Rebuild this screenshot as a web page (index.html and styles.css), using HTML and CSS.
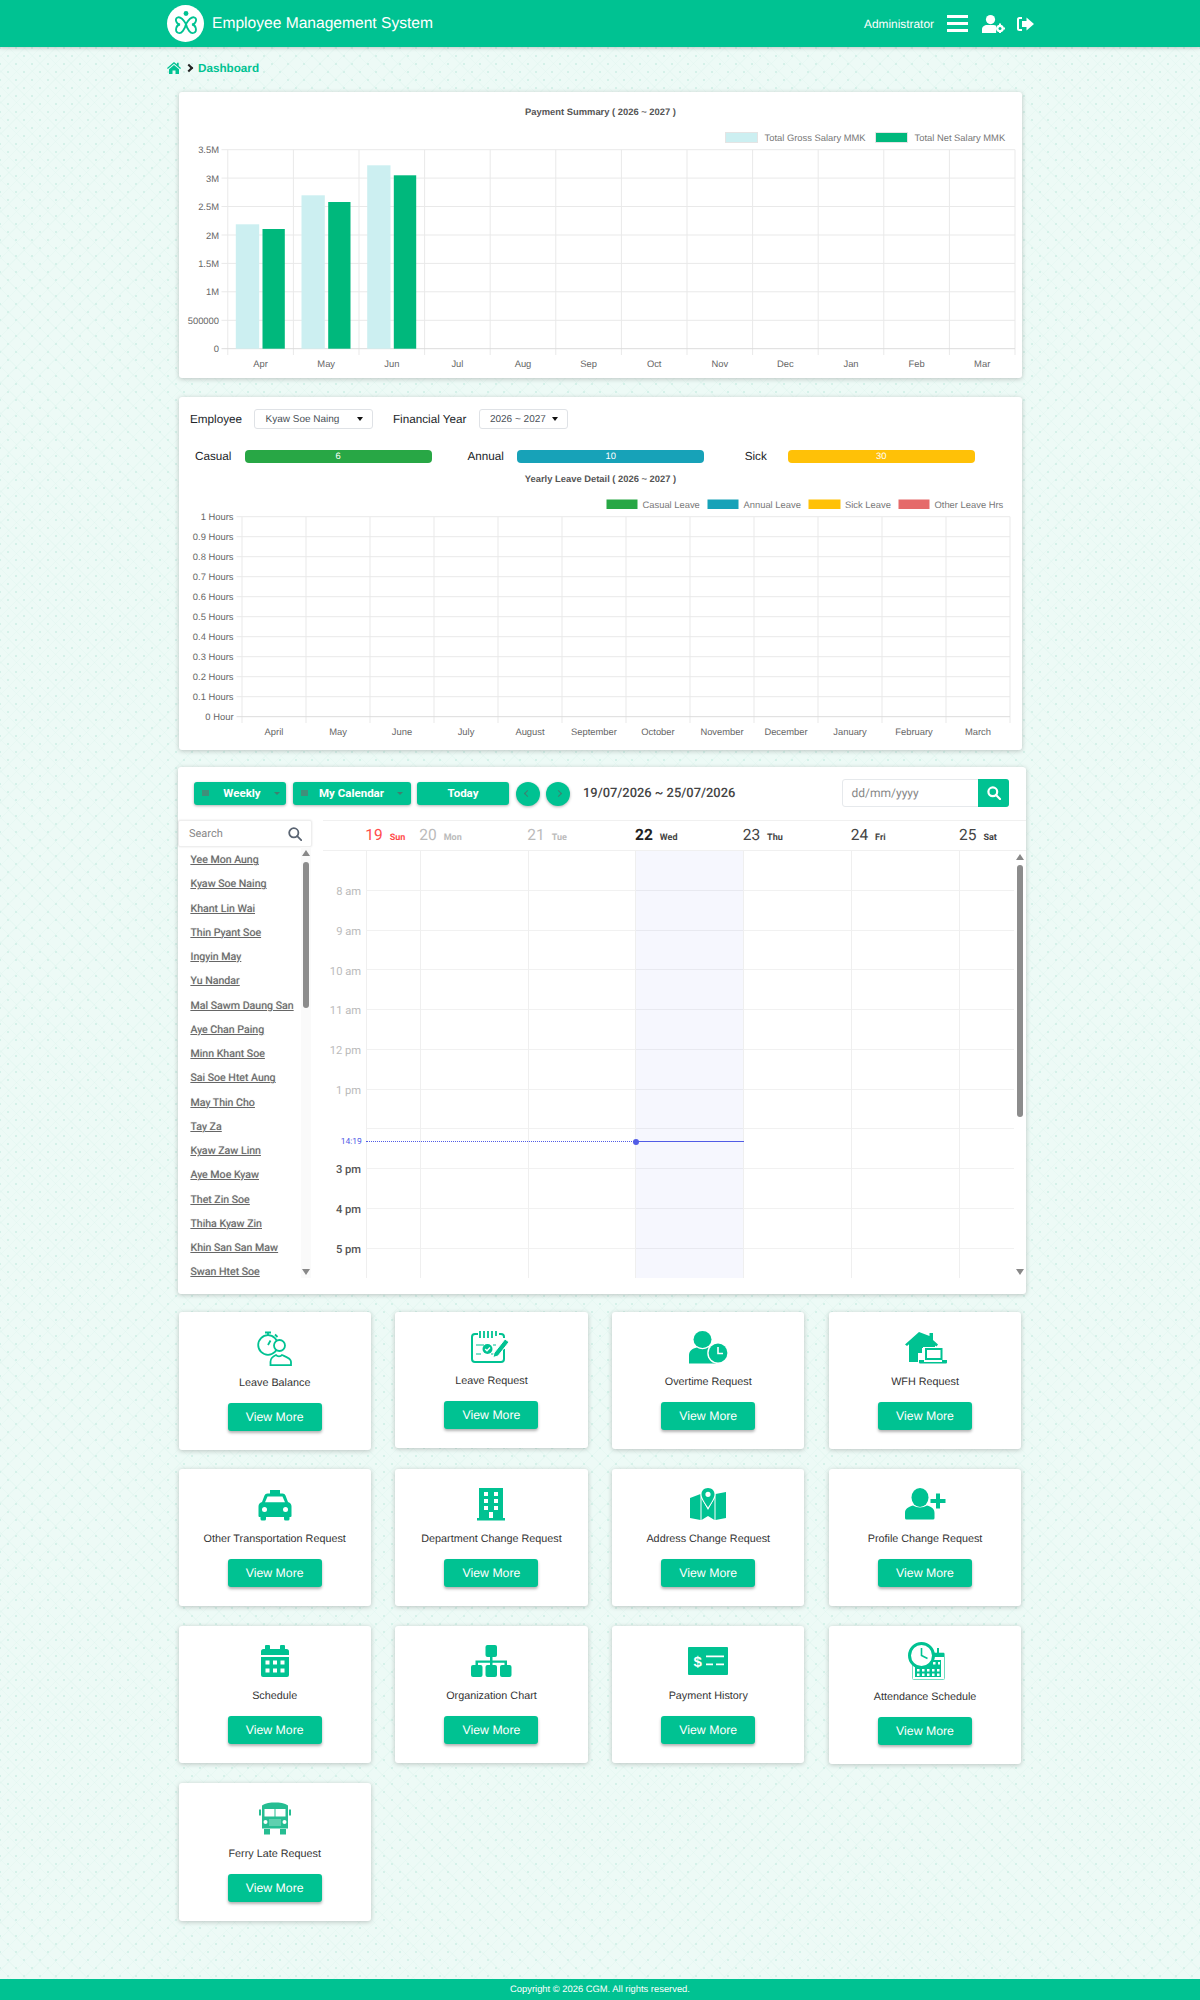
FILE: index.html
```html
<!DOCTYPE html>
<html lang="en">
<head>
    <meta charset="UTF-8">
    <title>Employee Management System</title>
    <link rel="stylesheet" href="styles.css">
</head>
<body>
    <header class="topbar">
        <div class="brand">
            <span class="logo">
                <svg width="26" height="28" viewBox="0 0 26 28" fill="none" stroke="#00c292" stroke-width="1.8">
                    <circle cx="13" cy="3.5" r="2.4" fill="#00c292" stroke="none"/>
                    <path d="M13 14C10 9 7 6.5 4.5 7.5 1.5 8.8 3 14 7 14.5 3 15 1.5 21 5 22.8 8.5 24.5 12 19 13 14Z"/>
                    <path d="M13 14C16 9 19 6.5 21.5 7.5 24.5 8.8 23 14 19 14.5 23 15 24.5 21 21 22.8 17.5 24.5 14 19 13 14Z"/>
                </svg>
            </span>
            <span class="brand-name">Employee Management System</span>
        </div>
        <div class="topbar-right">
            <span class="admin-name">Administrator</span>
            <span class="burger"><i></i><i></i><i></i></span>
            <svg class="top-icon" width="23" height="18" viewBox="0 0 23 18" fill="#fff">
                <circle cx="8.5" cy="4.6" r="4.6"/>
                <path d="M0 18v-3.500C0 11.500 2.500 10 5 10h6.500c1 0 2 .3 2.700.8-.3 1.400-.2 3.200 0 7.200Z"/>
                <circle cx="18" cy="13.500" r="3.800"/>
                <path d="M17 8.600h2v2h-2zM17 16.400h2v1.600h-2zM13.200 12.500h1.600v2h-1.600zM21.200 12.500H23v2h-1.800z"/>
                <circle cx="18" cy="13.500" r="1.500" fill="#00c292"/>
            </svg>
            <svg class="top-icon top-icon-out" width="18" height="16" viewBox="0 0 18 16" fill="#fff">
                <path d="M6 1H3.500A2.500 2.500 0 0 0 1 3.500v9A2.500 2.500 0 0 0 3.500 15H6v-2H3.500a.5.5 0 0 1-.5-.5v-9a.5.5 0 0 1 .5-.5H6Z"/>
                <path d="M10.500 1.500 18 8l-7.500 6.500V11H6V5h4.500Z"/>
            </svg>
        </div>
    </header>

    <nav class="crumb">
        <svg width="14" height="12" viewBox="0 0 14 12" fill="#00c292">
            <path d="M7 0 0 6l.8 1L7 1.800 13.200 7l.8-1-2.300-2V.8H10v1.800Z"/>
            <path d="M7 3 2 7.200V12h3.500V8.500h3V12H12V7.200Z"/>
        </svg>
        <span class="crumb-sep"></span>
        <a class="crumb-link">Dashboard</a>
    </nav>

    <main class="content">
        <section class="card chart-card">
            <svg class="chart" width="843" height="286" viewBox="178.500 92 843 286">
                <text class="chart-title" x="600" y="111">Payment Summary ( 2026 ~ 2027 )</text>
                <rect x="725" y="132.500" width="32" height="10" fill="#cceff1" stroke="#e4e4e4"/>
                <text class="legend" x="764" y="137.500">Total Gross Salary MMK</text>
                <rect x="875" y="132.500" width="32" height="10" fill="#00b87c" stroke="#e4e4e4"/>
                <text class="legend" x="914" y="137.500">Total Net Salary MMK</text>
                <path class="grid" d="M227.300 149.700V355M292.900 149.700V355M358.500 149.700V355M424.100 149.700V355M489.700 149.700V355M555.300 149.700V355M620.900 149.700V355M686.500 149.700V355M752.100 149.700V355M817.700 149.700V355M883.300 149.700V355M948.900 149.700V355M1014.500 149.700V355"/>
                <path class="grid" d="M221 149.700H1014.500M221 178.100H1014.500M221 206.500H1014.500M221 235H1014.500M221 263.400H1014.500M221 291.800H1014.500M221 320.300H1014.500"/>
                <path class="axis" d="M221 348.700H1014.500"/>
                <g fill="#cceff1">
                    <rect x="235.300" y="224.300" width="23.400" height="124.400"/>
                    <rect x="301" y="195.300" width="23.300" height="153.400"/>
                    <rect x="366.700" y="165.300" width="23.300" height="183.400"/>
                </g>
                <g fill="#00b87c">
                    <rect x="262" y="229" width="22.300" height="119.700"/>
                    <rect x="327.700" y="202" width="22.300" height="146.700"/>
                    <rect x="393.300" y="175.300" width="22.400" height="173.400"/>
                </g>
                <g class="tick tick-y">
                    <text x="218.500" y="149.700">3.5M</text>
                    <text x="218.500" y="178.100">3M</text>
                    <text x="218.500" y="206.500">2.5M</text>
                    <text x="218.500" y="235">2M</text>
                    <text x="218.500" y="263.400">1.5M</text>
                    <text x="218.500" y="291.800">1M</text>
                    <text x="218.500" y="320.300">500000</text>
                    <text x="218.500" y="348.700">0</text>
                </g>
                <g class="tick tick-x">
                    <text x="260.100" y="363">Apr</text>
                    <text x="325.700" y="363">May</text>
                    <text x="391.300" y="363">Jun</text>
                    <text x="456.900" y="363">Jul</text>
                    <text x="522.500" y="363">Aug</text>
                    <text x="588.100" y="363">Sep</text>
                    <text x="653.700" y="363">Oct</text>
                    <text x="719.300" y="363">Nov</text>
                    <text x="784.900" y="363">Dec</text>
                    <text x="850.500" y="363">Jan</text>
                    <text x="916.100" y="363">Feb</text>
                    <text x="981.700" y="363">Mar</text>
                </g>
            </svg>
        </section>

        <section class="card leave-card">
            <div class="filter-row">
                <label class="filter-label">Employee</label>
                <div class="select select-employee">Kyaw Soe Naing</div>
                <label class="filter-label filter-label-year">Financial Year</label>
                <div class="select select-year">2026 ~ 2027</div>
            </div>
            <div class="leave-row">
                <span class="leave-label leave-casual">Casual</span>
                <div class="leave-bar bar-green">6</div>
                <span class="leave-label leave-annual">Annual</span>
                <div class="leave-bar bar-blue">10</div>
                <span class="leave-label leave-sick">Sick</span>
                <div class="leave-bar bar-yellow">30</div>
            </div>
            <svg class="chart" width="843" height="285" viewBox="178.500 465 843 285">
                <text class="chart-title" x="600" y="478">Yearly Leave Detail ( 2026 ~ 2027 )</text>
                <rect x="606" y="499.500" width="31" height="9.500" fill="#28a745"/>
                <text class="legend" x="642" y="504.500">Casual Leave</text>
                <rect x="707" y="499.500" width="31" height="9.500" fill="#17a2b8"/>
                <text class="legend" x="743" y="504.500">Annual Leave</text>
                <rect x="808" y="499.500" width="32" height="9.500" fill="#ffc107"/>
                <text class="legend" x="844.500" y="504.500">Sick Leave</text>
                <rect x="898" y="499.500" width="31" height="9.500" fill="#e56a6a"/>
                <text class="legend" x="934" y="504.500">Other Leave Hrs</text>
                <path class="grid" d="M241.500 516.700V723M305.500 516.700V723M369.500 516.700V723M433.500 516.700V723M497.500 516.700V723M561.500 516.700V723M625.500 516.700V723M689.500 516.700V723M753.500 516.700V723M817.500 516.700V723M881.500 516.700V723M945.500 516.700V723M1009.500 516.700V723"/>
                <path class="grid" d="M236 516.700H1009.500M236 536.700H1009.500M236 556.700H1009.500M236 576.700H1009.500M236 596.700H1009.500M236 616.700H1009.500M236 636.700H1009.500M236 656.700H1009.500M236 676.700H1009.500M236 696.700H1009.500"/>
                <path class="axis" d="M236 716.700H1009.500"/>
                <g class="tick tick-y">
                    <text x="233" y="516.700">1 Hours</text>
                    <text x="233" y="536.700">0.9 Hours</text>
                    <text x="233" y="556.700">0.8 Hours</text>
                    <text x="233" y="576.700">0.7 Hours</text>
                    <text x="233" y="596.700">0.6 Hours</text>
                    <text x="233" y="616.700">0.5 Hours</text>
                    <text x="233" y="636.700">0.4 Hours</text>
                    <text x="233" y="656.700">0.3 Hours</text>
                    <text x="233" y="676.700">0.2 Hours</text>
                    <text x="233" y="696.700">0.1 Hours</text>
                    <text x="233" y="716.700">0 Hour</text>
                </g>
                <g class="tick tick-x">
                    <text x="273.500" y="731">April</text>
                    <text x="337.500" y="731">May</text>
                    <text x="401.500" y="731">June</text>
                    <text x="465.500" y="731">July</text>
                    <text x="529.500" y="731">August</text>
                    <text x="593.500" y="731">September</text>
                    <text x="657.500" y="731">October</text>
                    <text x="721.500" y="731">November</text>
                    <text x="785.500" y="731">December</text>
                    <text x="849.500" y="731">January</text>
                    <text x="913.500" y="731">February</text>
                    <text x="977.500" y="731">March</text>
                </g>
            </svg>
        </section>

        <section class="card calendar-card">
            <div class="cal-toolbar">
                <button class="cal-btn btn-weekly"><span class="btn-grid"></span><span class="btn-text">Weekly</span><span class="btn-caret"></span></button>
                <button class="cal-btn btn-mine"><span class="btn-grid"></span><span class="btn-text">My Calendar</span><span class="btn-caret"></span></button>
                <button class="cal-btn btn-today">Today</button>
                <button class="cal-round"><span class="chev chev-left"></span></button>
                <button class="cal-round"><span class="chev chev-right"></span></button>
                <span class="cal-range">19/07/2026 ~ 25/07/2026</span>
                <div class="date-search">
                    <span class="date-input">dd/mm/yyyy</span>
                    <span class="date-btn">
                        <svg width="14" height="14" viewBox="0 0 14 14" fill="none" stroke="#fff" stroke-width="2.200">
                            <circle cx="5.800" cy="5.800" r="4.400"/>
                            <path d="m9 9 4 4" stroke-linecap="round"/>
                        </svg>
                    </span>
                </div>
            </div>
            <div class="cal-body">
                <aside class="cal-side">
                    <div class="side-search">
                        <span>Search</span>
                        <svg width="14" height="14" viewBox="0 0 14 14" fill="none" stroke="#5a6472" stroke-width="1.800">
                            <circle cx="5.800" cy="5.800" r="4.600"/>
                            <path d="m9.200 9.200 4 4" stroke-linecap="round"/>
                        </svg>
                    </div>
                    <ul class="name-list">
                        <li><a>Yee Mon Aung</a></li>
                        <li><a>Kyaw Soe Naing</a></li>
                        <li><a>Khant Lin Wai</a></li>
                        <li><a>Thin Pyant Soe</a></li>
                        <li><a>Ingyin May</a></li>
                        <li><a>Yu Nandar</a></li>
                        <li><a>Mal Sawm Daung San</a></li>
                        <li><a>Aye Chan Paing</a></li>
                        <li><a>Minn Khant Soe</a></li>
                        <li><a>Sai Soe Htet Aung</a></li>
                        <li><a>May Thin Cho</a></li>
                        <li><a>Tay Za</a></li>
                        <li><a>Kyaw Zaw Linn</a></li>
                        <li><a>Aye Moe Kyaw</a></li>
                        <li><a>Thet Zin Soe</a></li>
                        <li><a>Thiha Kyaw Zin</a></li>
                        <li><a>Khin San San Maw</a></li>
                        <li><a>Swan Htet Soe</a></li>
                    </ul>
                    <div class="side-scroll">
                        <span class="arrow-up"></span>
                        <span class="side-thumb"></span>
                        <span class="arrow-down"></span>
                    </div>
                </aside>
                <div class="cal-main">
                    <div class="day-head">
                        <div class="day-cell day-sun"><b>19</b><small>Sun</small></div>
                        <div class="day-cell day-past"><b>20</b><small>Mon</small></div>
                        <div class="day-cell day-past"><b>21</b><small>Tue</small></div>
                        <div class="day-cell day-now"><b>22</b><small>Wed</small></div>
                        <div class="day-cell"><b>23</b><small>Thu</small></div>
                        <div class="day-cell"><b>24</b><small>Fri</small></div>
                        <div class="day-cell"><b>25</b><small>Sat</small></div>
                    </div>
                    <div class="week">
                        <div class="hours">
                            <span class="hour-past">8 am</span>
                            <span class="hour-past">9 am</span>
                            <span class="hour-past">10 am</span>
                            <span class="hour-past">11 am</span>
                            <span class="hour-past">12 pm</span>
                            <span class="hour-past">1 pm</span>
                            <span></span>
                            <span>3 pm</span>
                            <span>4 pm</span>
                            <span>5 pm</span>
                        </div>
                        <div class="day-cols">
                            <div class="day-col"></div>
                            <div class="day-col"></div>
                            <div class="day-col"></div>
                            <div class="day-col day-col-now"></div>
                            <div class="day-col"></div>
                            <div class="day-col"></div>
                            <div class="day-col"></div>
                        </div>
                        <span class="now-label">14:19</span>
                        <span class="now-past"></span>
                        <span class="now-today"></span>
                        <span class="now-dot"></span>
                    </div>
                    <div class="main-scroll">
                        <span class="arrow-up"></span>
                        <span class="main-thumb"></span>
                        <span class="arrow-down"></span>
                    </div>
                </div>
            </div>
        </section>

        <section class="tiles">
            <div class="tile tile-h41">
                <svg class="tile-icon" viewBox="0 0 56 41" fill="none" stroke="#00c292" stroke-width="1.800">
                    <circle cx="21" cy="16" r="9.800"/>
                    <path d="M18 3.500h6M21 3.500v2.700M28 5.500l2.500 2.500M21 16l2.500-4.500"/>
                    <circle cx="32.500" cy="16.500" r="5.500" fill="#fff"/>
                    <path d="M24 36.200v-3.500c0-3.500 2-5.200 5.500-6.700.8 1 1.800 1.400 3 1.400s2.200-.4 3-1.400c3.500 1.500 9 3.200 9 6.700v3.500Z" fill="#fff" transform="translate(-.5 0)"/>
                </svg>
                <p class="tile-name">Leave Balance</p>
                <a class="tile-btn">View More</a>
            </div>
            <div class="tile tile-h39">
                <svg class="tile-icon" viewBox="0 0 56 39" fill="none" stroke="#00c292" stroke-width="2">
                    <path d="M15 5h-3a3 3 0 0 0-3 3v22a3 3 0 0 0 3 3h26a3 3 0 0 0 3-3V20M36 5h2a3 3 0 0 1 3 3v1"/>
                    <path d="M17 2v7M21 2v7M25 2v7M29 2v7M33 2v5" stroke-width="1.800"/>
                    <path d="M13 16h8M30 16h3M13 25h5M28 25h3" stroke-width="1.200"/>
                    <circle cx="24.500" cy="20" r="5" fill="#00c292" stroke="none"/>
                    <path d="m22.200 20 1.800 1.800 3-3.200" stroke="#fff" stroke-width="1.400"/>
                    <path d="m31 24 11-14 4 3-11 14-5 1.500Z" fill="#00c292" stroke="#fff" stroke-width="1"/>
                </svg>
                <p class="tile-name">Leave Request</p>
                <a class="tile-btn">View More</a>
            </div>
            <div class="tile tile-h40">
                <svg class="tile-icon" viewBox="0 0 56 40" fill="#00c292">
                    <ellipse cx="22.500" cy="10.500" rx="9" ry="8.500"/>
                    <path d="M9 34.500v-8c0-4.500 3-7 8-8 1.700 1.200 3.500 1.700 5.500 1.700s3.800-.5 5.500-1.700c4 .8 7 2.500 8 6v10Z"/>
                    <circle cx="38" cy="24" r="10.800" fill="#fff"/>
                    <circle cx="38" cy="24" r="9.400"/>
                    <path d="M38 18v6.500h5" fill="none" stroke="#fff" stroke-width="1.600"/>
                </svg>
                <p class="tile-name">Overtime Request</p>
                <a class="tile-btn">View More</a>
            </div>
            <div class="tile tile-h40">
                <svg class="tile-icon" viewBox="0 0 56 40" fill="#00c292">
                    <path d="M22 3 8 15.500l2 1.500 2-1.700V33h9v-9h4v-5h13v-2.500l1.500 1 1.500-2-5-4.500V4h-3.500v3Z"/>
                    <path d="M26 18h20v13H26Z" fill="#fff"/>
                    <path d="M28 19h17.500v12H28Zm2 2v8h13.500v-8ZM22 31h5v2h18v-2h5v2.500a1 1 0 0 1-1 1H23a1 1 0 0 1-1-1Z"/>
                </svg>
                <p class="tile-name">WFH Request</p>
                <a class="tile-btn">View More</a>
            </div>

            <div class="tile">
                <svg class="tile-icon" viewBox="0 0 56 40" fill="#00c292">
                    <path d="M23 4h10v3.500h2.500c1.500 0 2.500.8 3 2l2.500 6.500c2.500.8 3.500 2.500 3.500 4.500V30a1 1 0 0 1-1 1h-1v2a1.500 1.500 0 0 1-1.500 1.500h-2.500A1.500 1.500 0 0 1 37 33v-2H19v2a1.500 1.500 0 0 1-1.500 1.500H15a1.500 1.500 0 0 1-1.500-1.500v-2h-1a1 1 0 0 1-1-1v-9.500c0-2 1-3.700 3.500-4.500l2.500-6.500c.5-1.200 1.500-2 3-2H23Z"/>
                    <path d="M20.500 10.500h15L38 16.200H18Z" fill="#fff"/>
                    <circle cx="17.500" cy="23.500" r="2.500" fill="#fff"/>
                    <circle cx="38.500" cy="23.500" r="2.500" fill="#fff"/>
                </svg>
                <p class="tile-name">Other Transportation Request</p>
                <a class="tile-btn">View More</a>
            </div>
            <div class="tile">
                <svg class="tile-icon" viewBox="0 0 56 40" fill="#00c292">
                    <path d="M16 2h24v30h2v2.500H14V32h2Z"/>
                    <path d="M21 6h4v4h-4zM31 6h4v4h-4zM21 13h4v4h-4zM31 13h4v4h-4zM21 20h4v4h-4zM31 20h4v4h-4zM26 26h4v6h-4z" fill="#fff"/>
                </svg>
                <p class="tile-name">Department Change Request</p>
                <a class="tile-btn">View More</a>
            </div>
            <div class="tile">
                <svg class="tile-icon" viewBox="0 0 56 40" fill="#00c292">
                    <path d="M10 12 20.500 8v26L10 32Z"/>
                    <path d="M35.500 8 46 6v26l-10.500 2Z"/>
                    <path d="M21.500 12l6.500 12 6.500-12v22L28 30l-6.500 4Z"/>
                    <path d="M28 1c-4.700 0-7.500 3.300-7.500 7.200 0 4.300 4 9.300 7.500 14.800 3.500-5.500 7.500-10.500 7.500-14.800C35.500 4.300 32.700 1 28 1Z" fill="#fff"/>
                    <path d="M28 2c-4 0-6.500 2.800-6.500 6.300 0 3.800 3.500 8.500 6.500 13.200 3-4.700 6.500-9.400 6.500-13.200C34.500 4.800 32 2 28 2Zm0 3.700a2.600 2.600 0 1 1 0 5.200 2.600 2.600 0 0 1 0-5.200Z"/>
                </svg>
                <p class="tile-name">Address Change Request</p>
                <a class="tile-btn">View More</a>
            </div>
            <div class="tile">
                <svg class="tile-icon" viewBox="0 0 56 40" fill="#00c292">
                    <ellipse cx="23" cy="11.500" rx="8.500" ry="9.500"/>
                    <path d="M8 32v-5c0-4 3-6 8-7.500 2 1.300 4.500 2 7 2s5-.7 7-2c5 1.500 7.500 3.500 7.500 7.500v5a1.500 1.500 0 0 1-1.500 1.500H9.500A1.500 1.500 0 0 1 8 32Z"/>
                    <path d="M39 7.500h4v5.500h5.500v4H43v5.500h-4V17h-5.500v-4H39Z"/>
                </svg>
                <p class="tile-name">Profile Change Request</p>
                <a class="tile-btn">View More</a>
            </div>

            <div class="tile">
                <svg class="tile-icon" viewBox="0 0 56 40" fill="#00c292">
                    <path d="M19 2h3a1 1 0 0 1 1 1v3h10V3a1 1 0 0 1 1-1h3a1 1 0 0 1 1 1v3h1.500A2.500 2.500 0 0 1 42 8.500V12H14V8.500A2.500 2.500 0 0 1 16.500 6H18V3a1 1 0 0 1 1-1Z"/>
                    <path d="M14 14h28v18a2 2 0 0 1-2 2H16a2 2 0 0 1-2-2Z"/>
                    <path d="M18.500 17.500h4v4h-4zM26 17.500h4v4h-4zM33.500 17.500h4v4h-4zM18.500 25.500h4v4h-4zM26 25.500h4v4h-4zM33.500 25.500h4v4h-4z" fill="#fff"/>
                </svg>
                <p class="tile-name">Schedule</p>
                <a class="tile-btn">View More</a>
            </div>
            <div class="tile">
                <svg class="tile-icon" viewBox="0 0 56 40" fill="#00c292">
                    <rect x="22.500" y="2" width="11.500" height="12" rx="2"/>
                    <rect x="8" y="22" width="11.500" height="12" rx="2"/>
                    <rect x="22.500" y="22" width="11.500" height="12" rx="2"/>
                    <rect x="37" y="22" width="11.500" height="12" rx="2"/>
                    <path d="M27 14h2.500v3.500H44V22h-2.500v-2.200H29.500V22H27v-2.200H15V22h-2.500v-4.500H27Z"/>
                </svg>
                <p class="tile-name">Organization Chart</p>
                <a class="tile-btn">View More</a>
            </div>
            <div class="tile">
                <svg class="tile-icon" viewBox="0 0 56 40" fill="#00c292">
                    <rect x="8" y="4" width="40" height="28" rx="1"/>
                    <text class="money-sign" x="13.500" y="23.500">$</text>
                    <path d="M26 12.500h18v1.800H26zM26 20.500h7v1.800h-7zM36 20.500h8v1.800h-8z" fill="#fff"/>
                </svg>
                <p class="tile-name">Payment History</p>
                <a class="tile-btn">View More</a>
            </div>
            <div class="tile tile-h41">
                <svg class="tile-icon" viewBox="0 0 56 41">
                    <rect x="15.500" y="10" width="32" height="26.500" rx="1" fill="#fff" stroke="#6fdcc0"/>
                    <path d="M36 10h11v4H36z" fill="#00c292"/>
                    <path d="M40 5h2v6h-2z" fill="#00c292"/>
                    <path d="M18 24h26v10H18zM28 17h16v7H28z" fill="#00c292"/>
                    <path d="M31 19h2.500v2.500H31zM36 19h2.500v2.500H36zM41 19h2v2.500h-2zM20 26h2.500v2.500H20zM25 26h2.500v2.500H25zM30 26h2.500v2.500H30zM35 26h2.500v2.500H35zM40 26h2.500v2.500H40zM20 30.500h2.500V33H20zM25 30.500h2.500V33H25zM30 30.500h2.500V33H30zM35 30.500h2.500V33H35zM40 30.500h2.500V33H40z" fill="#fff"/>
                    <circle cx="24.500" cy="12.500" r="12" fill="#fff" stroke="#00c292" stroke-width="3"/>
                    <path d="M24.500 5v7.500l6 3" fill="none" stroke="#00c292" stroke-width="1.600"/>
                </svg>
                <p class="tile-name">Attendance Schedule</p>
                <a class="tile-btn">View More</a>
            </div>

            <div class="tile tile-h41">
                <svg class="tile-icon" viewBox="0 0 56 41" fill="#26bd92">
                    <path d="M15 5.500C18 3 24 2.500 28 2.500s10 .5 13 3v23H15Z"/>
                    <path d="M12 9.500h2v6h-2zM42 9.500h2v6h-2z"/>
                    <path d="M17 29h6v5.500h-6zM33 29h6v5.500h-6z"/>
                    <path d="M17.500 9h10v7.500h-10zM28.500 9h10v7.500h-10z" fill="#fff"/>
                    <circle cx="18.500" cy="22" r="2" fill="#fff"/>
                    <circle cx="37.500" cy="22" r="2" fill="#fff"/>
                    <path d="M22 19h12v7H22z" fill="#5fd0af"/>
                </svg>
                <p class="tile-name">Ferry Late Request</p>
                <a class="tile-btn">View More</a>
            </div>
        </section>
    </main>

    <footer class="footer">Copyright &copy; 2026 CGM. All rights reserved.</footer>
</body>
</html>
```

FILE: styles.css
```css
* {
    box-sizing: border-box;
}

body {
    margin: 0;
    min-height: 2000px;
    display: flex;
    flex-direction: column;
    font-family: "Liberation Sans", Arial, sans-serif;
    text-rendering: geometricPrecision;
    color: #333;
    background-color: #edfaf6;
    background-image:
        radial-gradient(circle, #d5f1e9 1px, transparent 1.3px),
        radial-gradient(circle, #d5f1e9 1px, transparent 1.3px),
        repeating-linear-gradient(45deg, rgba(205, 238, 228, 0.16) 0 1px, transparent 1px 11px),
        repeating-linear-gradient(-45deg, rgba(205, 238, 228, 0.16) 0 1px, transparent 1px 11px);
    background-size: 16px 16px, 16px 16px, auto, auto;
    background-position: 0 0, 8px 8px, 0 0, 0 0;
}

/* top bar */
.topbar {
    height: 47px;
    padding: 0 166px 0 167px;
    display: flex;
    align-items: center;
    justify-content: space-between;
    background-color: #00c292;
    box-shadow: 0 1px 4px rgba(0, 0, 0, 0.2);
}

.brand {
    display: flex;
    align-items: center;
}

.logo {
    width: 37px;
    height: 37px;
    border-radius: 50%;
    background-color: #fff;
    display: flex;
    align-items: center;
    justify-content: center;
}

.brand-name {
    margin-left: 8px;
    font-size: 15.600px;
    color: #fff;
}

.topbar-right {
    display: flex;
    align-items: center;
}

.admin-name {
    font-size: 11.900px;
    color: #fff;
}

.burger {
    margin-left: 13px;
    width: 21px;
    display: flex;
    flex-direction: column;
    gap: 4.500px;
}

.burger i {
    height: 2.500px;
    background-color: #fff;
}

.top-icon {
    margin-left: 14px;
}

.top-icon-out {
    margin-left: 11px;
}

/* breadcrumb */
.crumb {
    height: 20px;
    margin: 11px 0 14px 167px;
    display: flex;
    align-items: center;
}

.crumb-sep {
    width: 6px;
    height: 6px;
    margin: 0 6px 0 5px;
    border-top: 2px solid #222;
    border-right: 2px solid #222;
    transform: rotate(45deg);
}

.crumb-link {
    font-size: 11.700px;
    font-weight: bold;
    color: #00c292;
}

/* cards */
.content {
    margin-left: 178.500px;
    width: 843px;
}

.card {
    background-color: #fff;
    border-radius: 3px;
    box-shadow: 0 1px 5px rgba(0, 0, 0, 0.22);
}

.chart-card {
    height: 286px;
}

.chart {
    display: block;
}

.chart-title {
    font-size: 9.400px;
    font-weight: bold;
    fill: #555;
    text-anchor: middle;
    dominant-baseline: central;
}

.legend {
    font-size: 9.400px;
    fill: #777;
    dominant-baseline: central;
}

.grid {
    fill: none;
    stroke: #e9e9e9;
}

.axis {
    fill: none;
    stroke: #dcdcdc;
}

.tick {
    font-size: 9.400px;
    fill: #666;
    dominant-baseline: central;
}

.tick-y {
    text-anchor: end;
}

.tick-x {
    text-anchor: middle;
}

/* leave card */
.leave-card {
    margin-top: 19px;
    height: 353px;
    padding-top: 12px;
}

.filter-row {
    height: 20px;
    padding-left: 11.500px;
    display: flex;
    align-items: center;
}

.filter-label {
    font-size: 11.700px;
    color: #212529;
}

.filter-label-year {
    margin-left: 19.500px;
}

.select {
    position: relative;
    height: 19.500px;
    margin-left: 12.500px;
    padding-left: 10px;
    display: flex;
    align-items: center;
    font-size: 10px;
    color: #495057;
    background-color: #fff;
    border: 1px solid #dfe2e6;
    border-radius: 3px;
}

.select::after {
    content: "";
    position: absolute;
    top: 6.500px;
    right: 9px;
    border-left: 3.500px solid transparent;
    border-right: 3.500px solid transparent;
    border-top: 4.500px solid #111;
}

.select-employee {
    width: 119px;
}

.select-year {
    width: 89px;
}

.leave-row {
    height: 13px;
    margin: 21px 0 2px;
    display: flex;
    align-items: center;
}

.leave-label {
    font-size: 11.700px;
    color: #212529;
}

.leave-casual {
    width: 66px;
    padding-left: 16.500px;
}

.leave-annual {
    width: 85.800px;
    padding-left: 36px;
}

.leave-sick {
    width: 83.400px;
    padding-left: 40.400px;
}

.leave-bar {
    width: 187px;
    height: 12.700px;
    border-radius: 4px;
    font-size: 9.400px;
    line-height: 12.700px;
    text-align: center;
    color: #fff;
}

.bar-green {
    background-color: #28a745;
}

.bar-blue {
    background-color: #17a2b8;
}

.bar-yellow {
    background-color: #ffc107;
}

/* calendar */
.calendar-card {
    margin-top: 17px;
    width: 848px;
    margin-left: -0.500px;
    height: 527px;
    font-family: Roboto, "Liberation Sans", sans-serif;
}

.cal-toolbar {
    height: 53px;
    padding: 14.500px 0 0 16px;
    display: flex;
    align-items: flex-start;
}

.cal-btn {
    height: 23.500px;
    padding: 0;
    display: flex;
    align-items: center;
    justify-content: center;
    font-family: inherit;
    font-size: 11.500px;
    font-weight: bold;
    color: #fff;
    background-color: #00c292;
    border: none;
    border-radius: 3px;
    box-shadow: 0 1px 3px rgba(0, 0, 0, 0.3);
}

.btn-weekly {
    width: 92px;
    padding-left: 2px;
}

.btn-mine {
    width: 118px;
    margin-left: 7px;
}

.btn-today {
    width: 92px;
    margin-left: 6px;
}

.btn-grid {
    width: 7px;
    height: 6px;
    margin-right: 14px;
    background-color: #3f8f7a;
}

.btn-mine .btn-grid {
    margin-right: 11px;
}

.btn-caret {
    margin-left: 13px;
    border-left: 3px solid transparent;
    border-right: 3px solid transparent;
    border-top: 3px solid #3f7f6f;
}

.cal-round {
    width: 24px;
    height: 24px;
    margin-left: 6.500px;
    padding: 0;
    display: flex;
    align-items: center;
    justify-content: center;
    background-color: #00c292;
    border: none;
    border-radius: 50%;
    box-shadow: 0 1px 3px rgba(0, 0, 0, 0.3);
}

.chev {
    width: 5px;
    height: 5px;
    border-top: 1.500px solid #3f7f6f;
    border-right: 1.500px solid #3f7f6f;
}

.chev-left {
    transform: rotate(-135deg);
}

.chev-right {
    transform: rotate(45deg);
}

.cal-range {
    margin-left: 13px;
    font-size: 12.900px;
    line-height: 24px;
    font-weight: 500;
    color: #444;
}

.date-search {
    margin: -2.500px 17px 0 auto;
    width: 167.500px;
    height: 28px;
    display: flex;
    border: 1px solid #e6e9ec;
    border-radius: 3px;
}

.date-input {
    flex: 1;
    padding-left: 9px;
    font-size: 12px;
    line-height: 27px;
    color: #888;
}

.date-btn {
    width: 31px;
    margin: -1px;
    display: flex;
    align-items: center;
    justify-content: center;
    background-color: #00c292;
    border-radius: 0 3px 3px 0;
}

.cal-body {
    height: 458px;
    display: flex;
}

.cal-side {
    position: relative;
    width: 145px;
    flex-shrink: 0;
}

.side-search {
    width: 133.500px;
    height: 27px;
    padding: 0 8.500px 0 10px;
    display: flex;
    align-items: center;
    justify-content: space-between;
    font-size: 11px;
    color: #888;
    border: 1px solid #eee;
    border-radius: 2px;
    box-shadow: 0 0 2px rgba(0, 0, 0, 0.12);
}

.name-list {
    margin: 0;
    padding: 1px 0 0 12.500px;
    list-style: none;
}

.name-list li {
    height: 24.250px;
    line-height: 24.250px;
    font-size: 10.600px;
}

.name-list a {
    color: #666;
    text-decoration: underline;
    text-shadow: 0 0 1px rgba(0, 0, 0, 0.35);
}

.side-scroll {
    position: absolute;
    top: 27px;
    left: 122.500px;
    bottom: 0;
    width: 10px;
    display: flex;
    flex-direction: column;
    align-items: center;
    justify-content: space-between;
    background-color: #fafafa;
}

.side-thumb {
    position: absolute;
    top: 15px;
    width: 6px;
    height: 146px;
    border-radius: 3px;
    background-color: #8c8c8c;
}

.main-thumb {
    position: absolute;
    top: 14px;
    width: 6px;
    height: 252px;
    border-radius: 3px;
    background-color: #8c8c8c;
}

.arrow-up {
    margin-top: 3px;
    border-left: 4px solid transparent;
    border-right: 4px solid transparent;
    border-bottom: 6px solid #888;
}

.arrow-down {
    margin-bottom: 3px;
    border-left: 4px solid transparent;
    border-right: 4px solid transparent;
    border-top: 6px solid #888;
}

.cal-main {
    position: relative;
    flex: 1;
}

.day-head {
    height: 31px;
    display: grid;
    grid-template-columns: 42.600px 54px 108px 107.700px 107.700px 108px 108.300px 66.700px;
    border-top: 1px solid #f0f0f0;
    border-bottom: 1px solid #f0f0f0;
    margin-left: -0.300px;
}

.day-cell {
    display: flex;
    align-items: baseline;
    white-space: nowrap;
    line-height: 28px;
    color: #444;
}

.day-cell:first-child {
    grid-column: 2;
}

.day-cell b {
    font-size: 15.500px;
    font-weight: 400;
}

.day-cell small {
    margin-left: 7px;
    font-size: 9px;
    font-weight: bold;
}

.day-sun {
    color: #ff4c4c;
}

.day-past {
    color: #bbb;
}

.day-now b {
    font-weight: bold;
    color: #222;
}

.week {
    position: relative;
    height: 426.700px;
    display: flex;
}

.hours {
    width: 42.600px;
    flex-shrink: 0;
    padding-top: 21px;
    display: flex;
    flex-direction: column;
    align-items: flex-end;
    font-size: 11.200px;
    font-weight: 500;
    color: #555;
}

.hours span {
    height: 39.750px;
    padding-right: 4.500px;
    line-height: 39.750px;
}

.hours .hour-past {
    font-weight: 400;
    color: #bbb;
}

.day-cols {
    width: 648.700px;
    display: grid;
    grid-template-columns: 54px 108px 107.700px 107.700px 108px 108.300px 55px;
    background-image: repeating-linear-gradient(to bottom, transparent 0 38.750px, #f1f1f1 38.750px 39.750px);
}

.day-col {
    border-left: 1px solid #efefef;
}

.day-col-now {
    background-color: rgba(81, 92, 230, 0.05);
}

.now-label {
    position: absolute;
    top: 284.500px;
    left: 17.700px;
    font-size: 8.500px;
    line-height: 12px;
    color: #515ce6;
}

.now-past {
    position: absolute;
    top: 290px;
    left: 42.600px;
    width: 270px;
    border-top: 1px dotted #515ce6;
}

.now-today {
    position: absolute;
    top: 290px;
    left: 312.600px;
    width: 108px;
    border-top: 1px solid #515ce6;
}

.now-dot {
    position: absolute;
    top: 287.500px;
    left: 309.600px;
    width: 6px;
    height: 6px;
    border-radius: 50%;
    background-color: #515ce6;
}

.main-scroll {
    position: absolute;
    top: 31px;
    right: 3px;
    bottom: 0;
    width: 7px;
    display: flex;
    flex-direction: column;
    align-items: center;
    justify-content: space-between;
}

/* tiles */
.tiles {
    margin-top: 18px;
    padding: 0 0 0 0.100px;
    display: grid;
    grid-template-columns: repeat(4, 192.200px);
    column-gap: 24.600px;
    row-gap: 19.300px;
    align-items: start;
}

.tile {
    padding: 17px 0 19px;
    display: flex;
    flex-direction: column;
    align-items: center;
    background-color: #fff;
    border-radius: 3px;
    box-shadow: 0 1px 5px rgba(0, 0, 0, 0.22);
}

.tile-icon {
    width: 56px;
    height: 40px;
    overflow: visible;
}

.tile-h41 .tile-icon {
    height: 41px;
}

.tile-h39 .tile-icon {
    height: 39px;
}

.tile-name {
    margin: 5px 0 0;
    font-size: 10.800px;
    line-height: 16px;
    color: #333;
}

.tile-btn {
    width: 94px;
    height: 28px;
    margin-top: 12px;
    font-size: 12.300px;
    line-height: 28px;
    text-align: center;
    color: #fff;
    background-color: #00c292;
    border-radius: 3px;
    box-shadow: 0 2px 3px rgba(0, 0, 0, 0.3);
}

.money-sign {
    font-size: 15px;
    font-weight: bold;
    fill: #fff;
}

/* footer */
.footer {
    margin-top: auto;
    height: 21px;
    font-size: 9.400px;
    line-height: 20px;
    text-align: center;
    color: #fff;
    background-color: #00c292;
}
```
